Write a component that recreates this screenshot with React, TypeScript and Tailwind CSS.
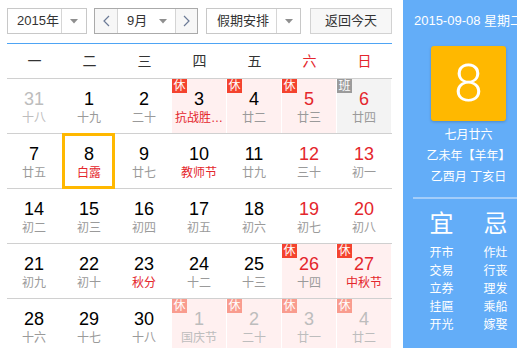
import React from "react";

type Cell = {
  d: number;
  l: string;
  red?: boolean;
  lred?: boolean;
  other?: boolean;
  tag?: "休" | "班";
  sel?: boolean;
};

const rows: Cell[][] = [
  [
    { d: 31, l: "十八", other: true },
    { d: 1, l: "十九" },
    { d: 2, l: "二十" },
    { d: 3, l: "抗战胜…", lred: true, tag: "休" },
    { d: 4, l: "廿二", tag: "休" },
    { d: 5, l: "廿三", red: true, tag: "休" },
    { d: 6, l: "廿四", red: true, tag: "班" },
  ],
  [
    { d: 7, l: "廿五" },
    { d: 8, l: "白露", lred: true, sel: true },
    { d: 9, l: "廿七" },
    { d: 10, l: "教师节", lred: true },
    { d: 11, l: "廿九" },
    { d: 12, l: "三十", red: true },
    { d: 13, l: "初一", red: true },
  ],
  [
    { d: 14, l: "初二" },
    { d: 15, l: "初三" },
    { d: 16, l: "初四" },
    { d: 17, l: "初五" },
    { d: 18, l: "初六" },
    { d: 19, l: "初七", red: true },
    { d: 20, l: "初八", red: true },
  ],
  [
    { d: 21, l: "初九" },
    { d: 22, l: "初十" },
    { d: 23, l: "秋分", lred: true },
    { d: 24, l: "十二" },
    { d: 25, l: "十三" },
    { d: 26, l: "十四", red: true, tag: "休" },
    { d: 27, l: "中秋节", red: true, lred: true, tag: "休" },
  ],
  [
    { d: 28, l: "十六" },
    { d: 29, l: "十七" },
    { d: 30, l: "十八" },
    { d: 1, l: "国庆节", other: true, tag: "休" },
    { d: 2, l: "二十", other: true, tag: "休" },
    { d: 3, l: "廿一", other: true, tag: "休" },
    { d: 4, l: "廿二", other: true, tag: "休" },
  ],
];

const Caret = () => (
  <svg width="8" height="5" viewBox="0 0 8 5">
    <path d="M0 0 L8 0 L4 4.5 Z" fill="#8f8f8f" />
  </svg>
);

const Chevron = ({ dir }: { dir: "l" | "r" }) => (
  <svg width="7" height="12" viewBox="0 0 7 12">
    <path
      d={dir === "l" ? "M6 1 L1 6 L6 11" : "M1 1 L6 6 L1 11"}
      fill="none"
      stroke="#6b7a96"
      strokeWidth="1.2"
    />
  </svg>
);

function DayCell({ c }: { c: Cell }) {
  const bg =
    c.tag === "休" ? "bg-[#fff0f0]" : c.tag === "班" ? "bg-[#f3f3f3]" : "bg-white";
  const numColor = c.other ? "text-[#bdbdbd]" : c.red ? "text-[#e4262c]" : "text-black";
  const lunarColor = c.other
    ? "text-[#bdbdbd]"
    : c.lred
    ? "text-[#e4262c]"
    : "text-[#9a9a9a]";
  const badgeBg =
    c.tag === "班" ? "bg-[#9b9b9b]" : c.other ? "bg-[#f99c8f]" : "bg-[#f4432f]";
  return (
    <div className={`relative h-[54px] border-r border-white flex flex-col items-center ${bg}`}>
      {c.tag && (
        <div
          className={`absolute left-0 top-0 w-[15px] h-[14px] text-white text-[12px] leading-[14px] text-center ${badgeBg}`}
        >
          {c.tag}
        </div>
      )}
      <div className={`mt-[9px] text-[18px] leading-[22px] ${numColor}`}>{c.d}</div>
      <div className={`text-[12px] leading-[17px] whitespace-nowrap ${lunarColor}`}>{c.l}</div>
      {c.sel && (
        <div className="absolute -top-px -bottom-px left-0 -right-0 border-[3px] border-[#ffb800] mr-px" />
      )}
    </div>
  );
}

export default function App() {
  const font = { fontFamily: '"Liberation Sans", "Noto Sans CJK SC", sans-serif' };
  const weekdays = ["一", "二", "三", "四", "五", "六", "日"];
  return (
    <div className="w-[517px] h-[348px] overflow-hidden bg-white" style={font}>
      <div className="flex h-[348px]">
        {/* Left */}
        <div className="w-[385px] ml-[7px] mr-[11px] shrink-0">
          <div className="pt-[8px] flex items-center h-[34px] text-[13px] text-[#333]">
            {/* year */}
            <div className="flex h-[26px] w-[80px] border border-[#c8c8c8] bg-white">
              <div className="flex-1 flex items-center pl-[9px]">2015年</div>
              <div className="w-[25px] border-l border-[#d6d6d6] flex items-center justify-center">
                <Caret />
              </div>
            </div>
            {/* month */}
            <div className="ml-[7px] flex h-[26px] w-[104px] border border-[#aaaaaa]">
              <div className="w-[22px] bg-[#f7f7f7] flex items-center justify-center">
                <Chevron dir="l" />
              </div>
              <div className="flex-1 flex items-center border-l border-r border-[#d4d4d4] bg-white">
                <span className="pl-[9px]">9月</span>
                <span className="ml-auto mr-[8px] flex">
                  <Caret />
                </span>
              </div>
              <div className="w-[21px] bg-[#f7f7f7] flex items-center justify-center">
                <Chevron dir="r" />
              </div>
            </div>
            {/* holiday */}
            <div className="ml-[8px] flex h-[26px] w-[95px] border border-[#c8c8c8] bg-white">
              <div className="flex-1 flex items-center pl-[10px]">假期安排</div>
              <div className="w-[24px] border-l border-[#d6d6d6] flex items-center justify-center">
                <Caret />
              </div>
            </div>
            {/* today */}
            <div className="ml-[9px] h-[26px] w-[82px] border border-[#d2d2d2] bg-[#f7f7f7] flex items-center justify-center">
              返回今天
            </div>
          </div>
          <div className="mt-[9px] border-t border-[#4ea4f4]" />
          <div className="grid grid-cols-7 h-[35px] border-b border-[#d0d0d0] items-center text-[14px]">
            {weekdays.map((w, i) => (
              <div
                key={w}
                className={`text-center ${i >= 5 ? "text-[#e4262c]" : "text-[#333]"}`}
              >
                {w}
              </div>
            ))}
          </div>
          {rows.map((r, ri) => (
            <div key={ri} className="grid grid-cols-7 border-b border-[#d0d0d0]">
              {r.map((c, ci) => (
                <DayCell key={ci} c={c} />
              ))}
            </div>
          ))}
        </div>
        {/* Right */}
        <div className="w-[131px] shrink-0 bg-[#63adf8] text-white flex flex-col items-center">
          <div className="pt-[13px] text-[13px] leading-[16px] whitespace-nowrap">
            2015-09-08 星期二
          </div>
          <div className="mt-[17px] w-[75px] h-[75px] rounded-[3px] bg-[#ffb800] shadow-[0_1px_3px_rgba(0,0,0,0.2)] flex items-center justify-center">
            <span
              className="text-[52px] leading-none font-light"
              style={{ fontFamily: 'Roboto, "Liberation Sans", sans-serif' }}
            >
              8
            </span>
          </div>
          <div className="mt-[4px] text-[12px] leading-[21px] text-center whitespace-nowrap">
            <div>七月廿六</div>
            <div>乙未年【羊年】</div>
            <div>乙酉月 丁亥日</div>
          </div>
          <div className="mt-[9px] h-[2px] w-[111px] bg-[#a3cdfa]" />
          <div className="mt-[12px] grid grid-cols-[54px_54px] text-center">
            <div className="text-[24px] leading-[26px]">宜</div>
            <div className="text-[24px] leading-[26px]">忌</div>
            <div className="mt-[7px] text-[12px] leading-[18px]">
              <div>开市</div>
              <div>交易</div>
              <div>立券</div>
              <div>挂匾</div>
              <div>开光</div>
            </div>
            <div className="mt-[7px] text-[12px] leading-[18px]">
              <div>作灶</div>
              <div>行丧</div>
              <div>理发</div>
              <div>乘船</div>
              <div>嫁娶</div>
            </div>
          </div>
        </div>
      </div>
    </div>
  );
}
